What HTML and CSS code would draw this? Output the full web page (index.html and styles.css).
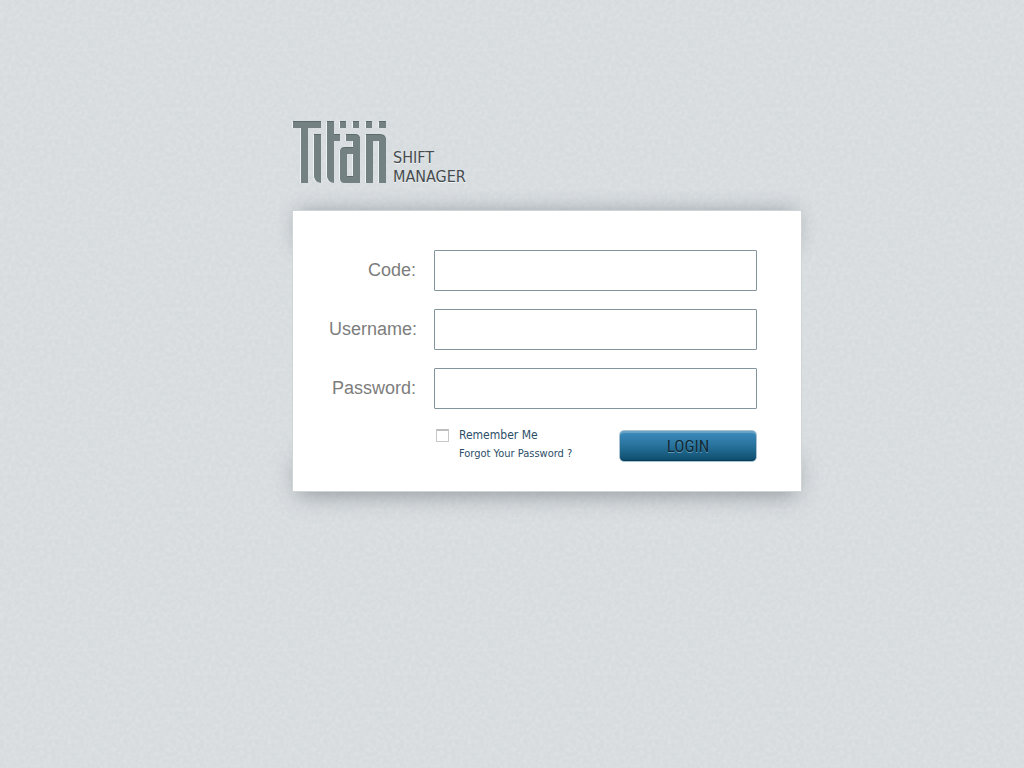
FILE: index.html
```html
<!DOCTYPE html>
<html lang="en">
<head>
<meta charset="utf-8">
<meta name="viewport" content="width=device-width, initial-scale=1">
<title>Titän Shift Manager</title>
<link rel="stylesheet" href="styles.css">
</head>
<body>
<main class="page">
  <div class="login">
    <header class="brand">
      <svg class="logo" viewBox="0 0 93 63" role="img" aria-label="Titän">
        <defs>
          <g id="bars">
            <rect width="28" height="6"/>
            <rect x="8" width="7" height="61"/>
            <path d="M21 13h7v48q-7-1-7-8z"/>
            <path d="M34 0h7v13h6v6h-6v42q-7-1-7-8z"/>
            <rect x="47" width="6" height="6"/>
            <rect x="60" width="6" height="6"/>
            <rect x="73" width="6" height="6"/>
            <rect x="86" width="7" height="6"/>
            <path fill-rule="evenodd" d="M53 13h9q5 0 5 5v43H51q-4 0-4-5V31q0-5 5-5h8v-7h-7zM54 32v23h6V32z"/>
            <path d="M73 13h14q6 0 6 6v42h-7V19h-6v42h-7z"/>
          </g>
        </defs>
        <use class="logo-light" href="#bars" x="-1" y="1"/>
        <use class="logo-edge" href="#bars"/>
        <use class="logo-face" href="#bars" y="1"/>
      </svg>
      <p class="product">SHIFT<br>MANAGER</p>
    </header>
    <form class="card">
      <div class="field"><label for="code">Code:</label><input id="code" name="code" type="text"></div>
      <div class="field"><label for="username">Username:</label><input id="username" name="username" type="text"></div>
      <div class="field"><label for="password">Password:</label><input id="password" name="password" type="password"></div>
      <div class="actions">
        <div class="options">
          <div class="remember"><input id="remember" type="checkbox"><label for="remember">Remember Me</label></div>
          <a class="forgot" href="#">Forgot Your Password ?</a>
        </div>
        <button class="submit" type="submit">LOGIN</button>
      </div>
    </form>
  </div>
</main>
</body>
</html>
```

FILE: styles.css
```css
* { box-sizing: border-box; }

body {
  margin: 0;
  min-height: 100vh;
  background-color: #d6dbde;
  background-image: url("data:image/svg+xml,%3Csvg xmlns='http://www.w3.org/2000/svg' width='200' height='200'%3E%3Cfilter id='n'%3E%3CfeTurbulence type='fractalNoise' baseFrequency='.25' numOctaves='3' stitchTiles='stitch'/%3E%3CfeColorMatrix values='0 0 0 0 1 0 0 0 0 1 0 0 0 0 1 .8 0 0 0 -.25'/%3E%3C/filter%3E%3Crect width='200' height='200' filter='url(%23n)' opacity='.4'/%3E%3C/svg%3E");
  font-family: "Liberation Sans", Arial, sans-serif;
}

.page {
  display: flex;
  justify-content: center;
  padding: 121px 0 40px 70px;
}

.login {
  position: relative;
  z-index: 0;
  width: 100%;
  max-width: 510px;
}

.brand {
  display: flex;
  align-items: flex-start;
  gap: 7px;
  padding-left: 1px;
  margin-bottom: 24px;
}

.logo { width: 93px; height: 63px; overflow: visible; }
.logo-light { fill: #eef1f2; }
.logo-edge { fill: #5d6a6b; }
.logo-face { fill: #748182; }

.product {
  margin: 0;
  padding-top: 27px;
  color: #454b4e;
  font: 16px/19px "DejaVu Sans Condensed", "Noto Sans", sans-serif;
  text-shadow: 0 1px 0 #f2f4f5;
}

.card {
  position: relative;
  display: flex;
  flex-direction: column;
  gap: 18px;
  padding: 39px 44px 27px 36px;
  background: #fff;
  border: 1px solid #cfd4d6;
}

/* Lifted-corner shadows behind the sheet */
.card::before,
.card::after {
  content: "";
  position: absolute;
  z-index: -1;
  left: 5px;
  right: 5px;
  height: 36px;
}
.card::before { top: 4px; box-shadow: 0 -4px 20px #4a545873; }
.card::after { bottom: 4px; box-shadow: 0 8px 22px #4a545880; }

.field { display: flex; align-items: center; gap: 18px; }

.field label {
  width: 87px;
  color: #7d7d7d;
  font-size: 18px;
  text-align: right;
}

.field input {
  flex: 1;
  min-width: 0;
  height: 41px;
  padding: 0 10px;
  border: 1px solid #84949c;
  border-radius: 1px;
  background: #fff;
  font: inherit;
}

.actions {
  display: flex;
  justify-content: space-between;
  align-items: flex-end;
  padding-left: 107px;
}

.options {
  color: #2b4e68;
  font-family: "DejaVu Sans Condensed", "Noto Sans", sans-serif;
}

.remember { display: flex; align-items: center; gap: 10px; font-size: 12px; line-height: 17px; }

.remember input {
  appearance: none;
  width: 13px;
  height: 13px;
  margin: 0;
  border: 1px solid #c9c9c9;
  border-top: 2px solid #bdbdbd;
  background: #fff;
}

.remember input:checked { background: #2b6f9c; }

.forgot {
  display: block;
  padding-left: 23px;
  color: inherit;
  font-size: 11px;
  line-height: 20px;
  text-decoration: none;
}

.submit {
  width: 138px;
  height: 32px;
  margin-bottom: 2px;
  padding: 0;
  border: 1px solid #a9c2cf;
  border-radius: 5px;
  background: linear-gradient(#3d8cbf, #2a759f 45%, #0d4c6c);
  box-shadow: inset 0 2px 1px #6aa5c7, inset 0 -1px 1px #083b55;
  color: #0f2836;
  font: 17px/28px "Roboto Condensed", "Open Sans Condensed", "Liberation Sans Narrow", sans-serif;
  text-shadow: 0 1px 0 #5d9ab8;
}
```
